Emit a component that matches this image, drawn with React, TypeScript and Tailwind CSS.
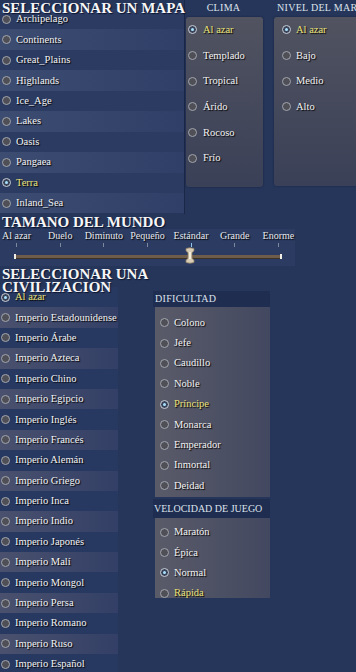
import React from "react";

const maps = ["Archipelago", "Continents", "Great_Plains", "Highlands", "Ice_Age", "Lakes", "Oasis", "Pangaea", "Terra", "Inland_Sea"];
const clima = ["Al azar", "Templado", "Tropical", "Árido", "Rocoso", "Frío"];
const nivel = ["Al azar", "Bajo", "Medio", "Alto"];
const sizes = ["Al azar", "Duelo", "Diminuto", "Pequeño", "Estándar", "Grande", "Enorme"];
const civs = [
  "Al azar",
  "Imperio Estadounidense",
  "Imperio Árabe",
  "Imperio Azteca",
  "Imperio Chino",
  "Imperio Egipcio",
  "Imperio Inglés",
  "Imperio Francés",
  "Imperio Alemán",
  "Imperio Griego",
  "Imperio Inca",
  "Imperio Indio",
  "Imperio Japonés",
  "Imperio Malí",
  "Imperio Mongol",
  "Imperio Persa",
  "Imperio Romano",
  "Imperio Ruso",
  "Imperio Español",
];
const dif = ["Colono", "Jefe", "Caudillo", "Noble", "Príncipe", "Monarca", "Emperador", "Inmortal", "Deidad"];
const vel = ["Maratón", "Épica", "Normal", "Rápida"];

function Radio({ on }: { on?: boolean }) {
  return on ? (
    <span className="flex h-[9px] w-[9px] shrink-0 items-center justify-center rounded-full border border-[#c9ced8] bg-[#3a4458]">
      <span className="h-[3px] w-[3px] rounded-full bg-[#a9e2ff]" />
    </span>
  ) : (
    <span className="h-[9px] w-[9px] shrink-0 rounded-full border border-[#a3a6ad] bg-[#4e4f57]" />
  );
}

function Label({ text, gold }: { text: string; gold?: boolean }) {
  return (
    <span
      className={
        gold
          ? "whitespace-nowrap text-[10.5px] leading-[12px] text-[#ebe27a] [text-shadow:1px_1px_1px_#000]"
          : "whitespace-nowrap text-[10.5px] leading-[12px] text-[#f2f2f2] [text-shadow:1px_1px_1px_#000]"
      }
    >
      {text}
    </span>
  );
}

const heading = "whitespace-nowrap text-[15px] font-bold text-[#f6f6f6] [text-shadow:1px_1px_1px_#0b1430]";

export default function App() {
  return (
    <div className="relative h-[672px] w-[356px] overflow-hidden bg-[#25365a] font-['Liberation_Serif',serif]">
      {/* Top: map + climate + sea level */}
      <div className="flex h-[213.5px]">
        <div className="w-[185px] shrink-0 border-r border-[#1a2746]">
          <div className={`relative z-10 h-[9px] pl-[2px] pt-[1px] leading-[14px] ${heading}`}>SELECCIONAR UN MAPA</div>
          {maps.map((m, i) => (
            <div
              key={m}
              className={
                i % 2 === 1
                  ? "flex h-[20.45px] items-center gap-[5px] bg-gradient-to-r from-[#3d4c71] to-[#2f3f67] pl-[2px]"
                  : "flex h-[20.45px] items-center gap-[5px] bg-[#2b3b62] pl-[2px]"
              }
            >
              <Radio on={m === "Terra"} />
              <Label text={m} gold={m === "Terra"} />
            </div>
          ))}
        </div>

        <div className="ml-[1px] flex w-[77px] shrink-0 flex-col">
          <div className="h-[17px] pr-[2px] text-center text-[10px] leading-[16px] tracking-[0.3px] text-[#dde2ec]">CLIMA</div>
          <div className="h-[170px] rounded-[3px] bg-gradient-to-b from-[#515360] to-[#3a4057] pl-[2px] shadow-[0_0_2px_#17223d]">
            {clima.map((c, i) => (
              <div key={c} className="flex h-[25.7px] items-center gap-[6px]">
                <Radio on={i === 0} />
                <Label text={c} gold={i === 0} />
              </div>
            ))}
          </div>
        </div>

        <div className="ml-[11px] flex w-[90px] shrink-0 flex-col">
          <div className="h-[17px] whitespace-nowrap pl-[3px] text-[10px] leading-[16px] tracking-[0.3px] text-[#dde2ec]">NIVEL DEL MAR</div>
          <div className="h-[169px] rounded-[3px] bg-gradient-to-b from-[#515360] to-[#3a4057] pl-[8px] shadow-[0_0_2px_#17223d]">
            {nivel.map((c, i) => (
              <div key={c} className="flex h-[25.7px] items-center gap-[5px]">
                <Radio on={i === 0} />
                <Label text={c} gold={i === 0} />
              </div>
            ))}
          </div>
        </div>
      </div>

      {/* World size */}
      <div className={`h-[15.5px] pl-[2px] pt-[1px] leading-[15px] ${heading}`}>TAMANO DEL MUNDO</div>
      <div className="relative h-[37px] w-[295px] bg-[#2b3b61]">
        <div className="ml-[-5.3px] grid grid-cols-[repeat(7,43.65px)] pt-[0.5px]">
          {sizes.map((s, i) => (
            <div key={s} className="flex flex-col items-center">
              <span className="whitespace-nowrap text-[10px] leading-[12px] text-[#e6e8ee] [text-shadow:1px_1px_1px_#000]">{s}</span>
              <span className={i === 4 ? "mt-[1px] h-[4px] w-px bg-[#8cc4ee]" : "mt-[1px] h-[4px] w-px bg-[#7d889e]"} />
            </div>
          ))}
        </div>
        <div className="relative ml-[14px] mt-[8px] h-[3px] w-[268px] bg-[#6f5d4b] shadow-[0_1px_0_#3d3226]">
          <span className="absolute left-0 top-[-1px] h-[5px] w-[2px] bg-[#f2efe6]" />
          <span className="absolute right-0 top-[-1px] h-[5px] w-[2px] bg-[#f2efe6]" />
          <svg className="absolute left-[171px] top-[-8px]" width="10" height="17" viewBox="0 0 10 17">
            <path d="M1 1.5 Q5 0 9 1.5 L9 4 Q7 5 7 6 L7 11 Q7 12 9 13 L9 15.5 Q5 17 1 15.5 L1 13 Q3 12 3 11 L3 6 Q3 5 1 4 Z" fill="#d9cdb5" stroke="#8a7b66" strokeWidth="0.8" />
            <rect x="4" y="5" width="2" height="7" fill="#f3ecdc" />
          </svg>
        </div>
      </div>

      {/* Civilization */}
      <div className={`relative z-10 h-[21px] pl-[2px] pt-[2px] leading-[12.5px] ${heading}`}>
        SELECCIONAR UNA
        <br />
        CIVILIZACION
      </div>
      <div className="flex">
        <div className="w-[118px] shrink-0">
          {civs.map((c, i) => (
            <div
              key={c}
              className={
                i % 2 === 1
                  ? "flex h-[20.4px] items-center gap-[5px] bg-gradient-to-r from-[#4a516e] to-[#333f66] pl-[1px]"
                  : "flex h-[20.4px] items-center gap-[5px] bg-[#283961] pl-[1px]"
              }
            >
              <Radio on={i === 0} />
              <Label text={c} gold={i === 0} />
            </div>
          ))}
        </div>

        <div className="ml-[35px] w-[117px] shrink-0 pt-[4px]">
          <div className="h-[16px] bg-[#1f2d50] pl-[2px] text-[10px] leading-[15px] tracking-[0.3px] text-[#dde2ec]">DIFICULTAD</div>
          <div className="ml-[2px] h-[190px] bg-gradient-to-r from-[#5a5b69] to-[#424860] pl-[5px] pt-[5.5px]">
            {dif.map((d) => (
              <div key={d} className="flex h-[20.4px] items-center gap-[5px]">
                <Radio on={d === "Príncipe"} />
                <Label text={d} gold={d === "Príncipe"} />
              </div>
            ))}
          </div>
          <div className="mt-[2px] h-[19px] whitespace-nowrap bg-[#1f2d50] pl-[1px] text-[10px] leading-[19px] text-[#dde2ec]">
            VELOCIDAD DE JUEGO
          </div>
          <div className="ml-[2px] h-[80px] overflow-hidden bg-gradient-to-r from-[#5a5b69] to-[#424860] pl-[5px] pt-[4px]">
            {vel.map((v) => (
              <div key={v} className="flex h-[20.4px] items-center gap-[5px]">
                <Radio on={v === "Normal"} />
                <Label text={v} gold={v === "Rápida"} />
              </div>
            ))}
          </div>
        </div>
      </div>
    </div>
  );
}
